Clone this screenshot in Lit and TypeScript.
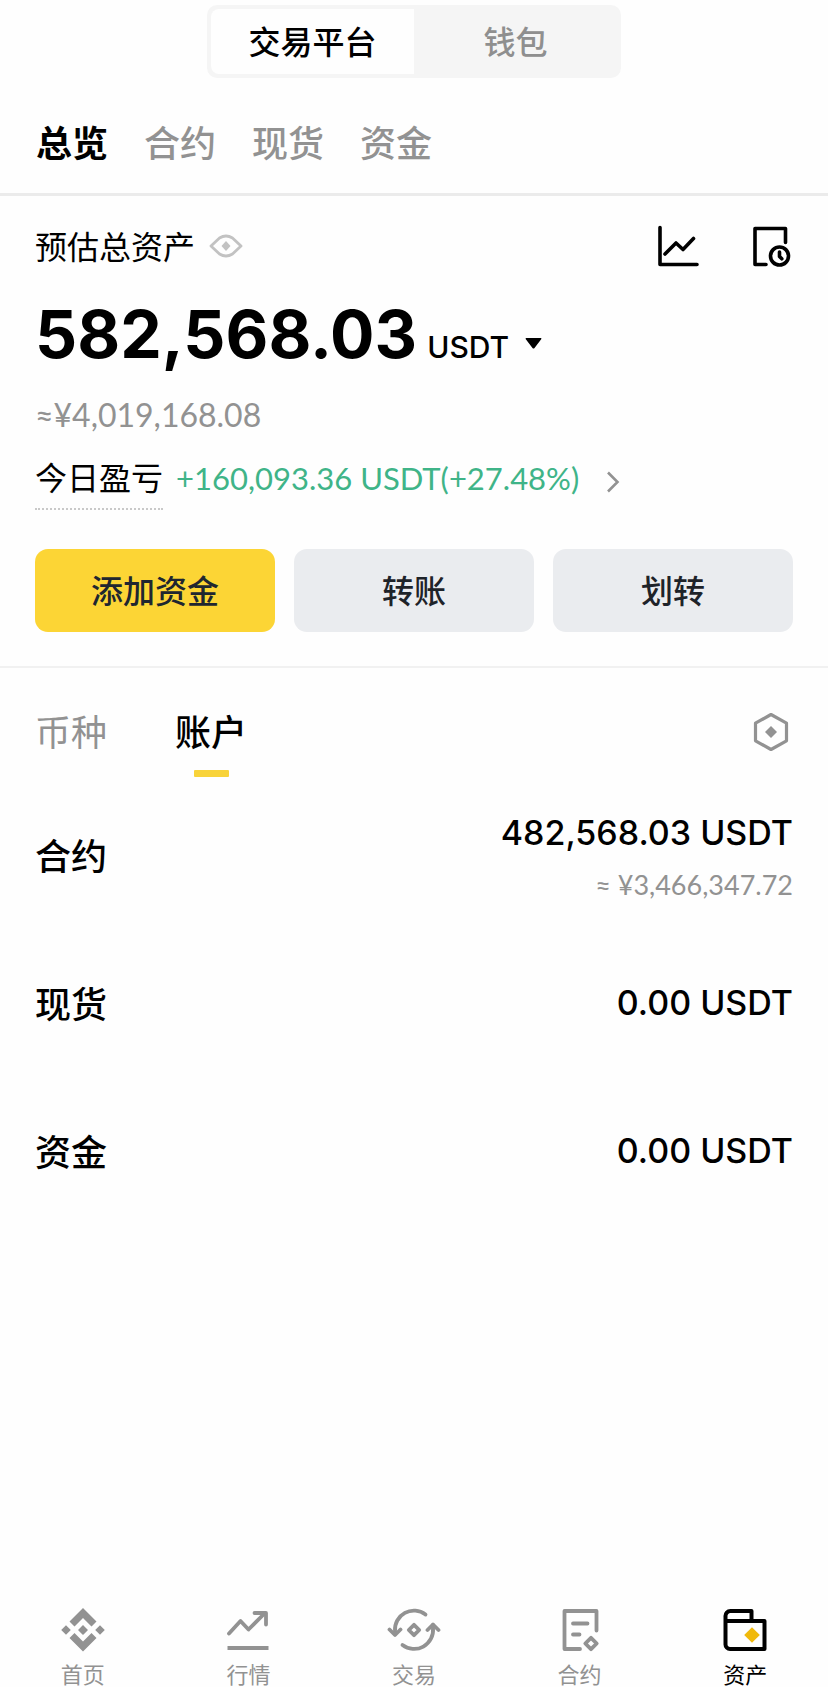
import { LitElement, html, css, svg, nothing } from "lit";
import { customElement, state } from "lit/decorators.js";
import { classMap } from "lit/directives/class-map.js";

interface Account {
  name: string;
  amount: string;
  approx?: string;
}

const ACCOUNTS: Account[] = [
  { name: "合约", amount: "482,568.03 USDT", approx: "≈ ¥3,466,347.72" },
  { name: "现货", amount: "0.00 USDT" },
  { name: "资金", amount: "0.00 USDT" },
];

const iconHome = svg`
  <svg class="icon" viewBox="0 0 44 44" fill="currentColor" aria-hidden="true">
    <path d="M22 0 35.500 13.500 30.500 18.500 22 10 13.500 18.500 8.500 13.500Z"/>
    <path d="M22 43.500 8.500 30 13.500 25 22 33.500 30.500 25 35.500 30Z"/>
    <path d="M22 17 27 22 22 27 17 22Z M5 17.200 9.800 22 5 26.800 .200 22Z M39 17.200 43.800 22 39 26.800 34.200 22Z"/>
  </svg>`;

const iconMarkets = svg`
  <svg class="icon" viewBox="0 0 44 44" fill="none" stroke="currentColor" stroke-width="3.800" stroke-linecap="round" stroke-linejoin="round" aria-hidden="true">
    <path d="M3 25.500 14.500 13 22.500 21.500 38.500 5.500"/>
    <path d="M28.500 5H40V16.500"/>
    <path d="M1.500 40H42.500" stroke-linecap="butt"/>
  </svg>`;

const iconTrade = svg`
  <svg class="icon wide" viewBox="0 0 54 44" fill="none" stroke="currentColor" stroke-width="3.800" stroke-linecap="round" stroke-linejoin="round" aria-hidden="true">
    <path d="M38.500 6.500A19 19 0 0 0 8 23V26"/>
    <path d="M2.500 21.500 8 27 13.500 21.500"/>
    <path d="M15.500 37A19 19 0 0 0 46 20V17"/>
    <path d="M40.500 22 46 16.500 51.500 22"/>
    <path d="M27 16.800 32.200 22 27 27.200 21.800 22Z"/>
  </svg>`;

const iconFutures = svg`
  <svg class="icon" viewBox="0 0 44 44" fill="none" stroke="currentColor" stroke-width="3.800" stroke-linecap="round" stroke-linejoin="round" aria-hidden="true">
    <path d="M22 41H6.500V3H38.500V22.500"/>
    <path d="M15 15.500H29.500M15 26.500H21.500"/>
    <path d="M33 29.800 38.700 35.500 33 41.200 27.300 35.500Z"/>
  </svg>`;

const iconAssets = svg`
  <svg class="icon" viewBox="0 0 44 44" fill="none" stroke="currentColor" stroke-width="4" stroke-linejoin="round" aria-hidden="true">
    <path d="M2.500 13V36.500A4.500 4.500 0 0 0 7 41H41.500V13H2.500V8.500A5 5 0 0 1 7.500 3H28.500V13"/>
    <path d="M29 19.200 36.800 27 29 34.800 21.200 27Z" fill="#f0b90b" stroke="none"/>
  </svg>`;

const NAV = [
  { label: "首页", icon: iconHome },
  { label: "行情", icon: iconMarkets },
  { label: "交易", icon: iconTrade },
  { label: "合约", icon: iconFutures },
  { label: "资产", icon: iconAssets },
];

@customElement("app-root")
export class AppRoot extends LitElement {
  static styles = css`
    :host {
      display: flex;
      flex-direction: column;
      min-height: 100vh;
      background: #fefefe;
      color: #000;
      font-family: "Noto Sans CJK SC", sans-serif;
      font-size: 32px;
    }
    * { box-sizing: border-box; }
    button, select {
      margin: 0;
      padding: 0;
      border: 0;
      background: none;
      color: inherit;
      font: inherit;
      cursor: pointer;
    }
    svg { display: block; flex: none; }
    p, h1, h2, ul { margin: 0; padding: 0; font-weight: inherit; font-size: inherit; }
    ul { list-style: none; }
    .icon { width: 44px; height: 44px; }
    .icon.wide { width: 54px; }

    .switch {
      align-self: center;
      display: grid;
      grid-template-columns: 1fr 1fr;
      width: 50%;
      min-width: 320px;
      height: 73px;
      margin-top: 5px;
      padding: 4px;
      border-radius: 10px;
      background: #f5f5f5;
    }
    .switch button { padding-bottom: 3px; color: #8f8f8f; font-weight: 500; border-radius: 8px; }
    .switch .on { background: #fefefe; color: #000; border-radius: 8px 0 0 8px; }

    .sections {
      display: flex;
      gap: 36px;
      padding: 41px 36px 30px;
      border-bottom: 3px solid #ebebeb;
      font-size: 36px;
      line-height: 44px;
      font-weight: 500;
      color: #929292;
    }
    .sections .on { color: #000; font-weight: 700; }

    .summary { padding: 27px 35px 34px; border-bottom: 2px solid #f1f1f1; }
    .head { display: flex; align-items: center; line-height: 44px; }
    .eye { margin-left: 14px; padding-top: 2px; color: #c2c2c2; }
    .tools { display: flex; gap: 49px; margin-left: auto; }

    .total {
      display: flex;
      align-items: baseline;
      margin-top: 27px;
      font-family: Inter, sans-serif;
      line-height: 80px;
    }
    .total h1 { font-size: 66px; font-weight: 700; }
    .currency { display: flex; align-items: baseline; gap: 16px; margin-left: 10px; }
    .currency select {
      appearance: none;
      font-size: 30px;
      font-weight: 500;
      line-height: 40px;
    }
    .currency svg { align-self: center; margin-bottom: 8px; }

    .approx {
      margin-top: 21px;
      font-family: Lato, sans-serif;
      line-height: 40px;
      color: #929292;
    }
    .pnl { display: flex; align-items: flex-start; margin-top: 17px; }
    .pnl-label {
      padding: 0 0 8px;
      line-height: 48px;
      border-bottom: 2px dotted #c9c9c9;
    }
    .pnl-link {
      display: flex;
      align-items: center;
      gap: 27px;
      margin-left: 13px;
      color: #929292;
      text-decoration: none;
    }
    .gain { font-family: Lato, sans-serif; font-size: 31px; line-height: 52px; color: #3fb488; }
    .pnl-link svg { margin-top: 8px; }

    .actions {
      display: grid;
      grid-template-columns: repeat(3, 1fr);
      gap: 19px;
      margin-top: 39px;
    }
    .actions button {
      height: 83px;
      padding-bottom: 4px;
      border-radius: 13px;
      background: #eaecef;
      color: #1e2329;
      font-weight: 500;
    }
    .actions .primary { background: #fcd535; color: #202630; }

    .tabs {
      display: flex;
      align-items: flex-start;
      padding: 40px 35px 0;
      gap: 68px;
      font-size: 36px;
      line-height: 44px;
    }
    .tabs .tab { color: #929292; font-weight: 400; }
    .tabs .tab.on { color: #000; font-weight: 500; }
    .tab.on::after {
      content: "";
      display: block;
      width: 35px;
      height: 7px;
      margin: 18px auto 0;
      background: #f8d33a;
      border-radius: 1px;
    }
    .tabs .filter { margin-left: auto; color: #929292; }

    .row {
      display: flex;
      align-items: center;
      justify-content: space-between;
      min-height: 148px;
      padding: 0 35px;
      font-weight: 500;
    }
    .accounts { padding-top: 3px; }
    .row h2 { font-size: 36px; line-height: 44px; }
    .values { padding-top: 2px; text-align: right; }
    .amount { font-family: Inter, sans-serif; font-size: 34px; line-height: 56px; }
    .sub {
      margin-top: 4px;
      font-family: Lato, sans-serif;
      font-size: 27px;
      font-weight: 400;
      line-height: 40px;
      color: #929292;
    }

    nav {
      display: grid;
      grid-template-columns: repeat(5, 1fr);
      margin-top: auto;
      padding-bottom: 1px;
    }
    nav a {
      display: flex;
      flex-direction: column;
      align-items: center;
      gap: 8px;
      font-size: 22px;
      line-height: 26px;
      color: #929292;
      text-decoration: none;
    }
    nav a.on { color: #000; }
  `;

  @state() private section = "总览";
  @state() private tab = "账户";

  render() {
    return html`
      <div class="switch">
        <button class="on">交易平台</button>
        <button>钱包</button>
      </div>

      <div class="sections">
        ${["总览", "合约", "现货", "资金"].map(
          (s) => html`<button
            class=${classMap({ on: s === this.section })}
            @click=${() => (this.section = s)}
          >${s}</button>`
        )}
      </div>

      <section class="summary">
        <div class="head">
          <p>预估总资产</p>
          <button class="eye" aria-label="隐藏资产">
            <svg width="34" height="24" viewBox="0 0 34 24" fill="none" stroke="currentColor" stroke-width="2.800" stroke-linejoin="round">
              <path d="M2 12 10.500 4Q17 0 23.500 4L32 12 23.500 20Q17 24 10.500 20Z"/>
              <path d="M17 7 21.500 12 17 17 12.500 12Z" fill="currentColor" stroke="none"/>
            </svg>
          </button>
          <div class="tools">
            <button aria-label="盈亏分析">
              <svg class="icon" viewBox="0 0 44 44" fill="none" stroke="currentColor" stroke-width="3.600" stroke-linecap="round" stroke-linejoin="round">
                <path d="M4 4.500V41.500H41"/>
                <path d="M9 31 20 20 27 26.500 37.500 15.500"/>
              </svg>
            </button>
            <button aria-label="历史记录">
              <svg class="icon" viewBox="0 0 44 44" fill="none" stroke="currentColor" stroke-width="3.600" stroke-linecap="round" stroke-linejoin="round">
                <path d="M17 41.500H6V5.500H36.500V19.500"/>
                <circle cx="30.500" cy="33" r="9"/>
                <path d="M30.500 29V33.500L32.800 35.800"/>
              </svg>
            </button>
          </div>
        </div>

        <div class="total">
          <h1>582,568.03</h1>
          <label class="currency">
            <select aria-label="计价单位"><option>USDT</option></select>
            <svg width="17" height="11" viewBox="0 0 17 11"><path d="M1 0H16Q17 .500 16 1.500L9.500 10Q8.500 11 7.500 10L1 1.500Q0 .500 1 0Z"/></svg>
          </label>
        </div>
        <p class="approx">≈¥4,019,168.08</p>
        <div class="pnl">
          <p class="pnl-label">今日盈亏</p>
          <a class="pnl-link" href="#pnl">
            <span class="gain">+160,093.36 USDT(+27.48%)</span>
            <svg width="14" height="22" viewBox="0 0 14 22" fill="none" stroke="currentColor" stroke-width="2.600" aria-hidden="true">
              <path d="M2 1.500 11.500 11 2 20.500"/>
            </svg>
          </a>
        </div>
        <div class="actions">
          <button class="primary">添加资金</button>
          <button>转账</button>
          <button>划转</button>
        </div>
      </section>

      <div class="tabs">
        ${["币种", "账户"].map(
          (t) => html`<button
            class=${classMap({ tab: true, on: t === this.tab })}
            @click=${() => (this.tab = t)}
          >${t}</button>`
        )}
        <button class="filter" aria-label="设置">
          <svg class="icon" viewBox="0 0 44 44" fill="none" stroke="currentColor" stroke-width="3.200" stroke-linejoin="round">
            <path d="M22 6.500 37.500 15.200V32.800L22 41.500 6.500 32.800V15.200Z"/>
            <path d="M22 18 28 24 22 30 16 24Z" fill="currentColor" stroke="none"/>
          </svg>
        </button>
      </div>

      <ul class="accounts">
        ${ACCOUNTS.map(
          (a) => html`<li class="row">
            <h2>${a.name}</h2>
            <div class="values">
              <p class="amount">${a.amount}</p>
              ${a.approx ? html`<p class="sub">${a.approx}</p>` : nothing}
            </div>
          </li>`
        )}
      </ul>

      <nav>
        ${NAV.map(
          (n, i) => html`<a href="#${n.label}" class=${classMap({ on: i === 4 })}>${n.icon}<span>${n.label}</span></a>`
        )}
      </nav>
    `;
  }
}
